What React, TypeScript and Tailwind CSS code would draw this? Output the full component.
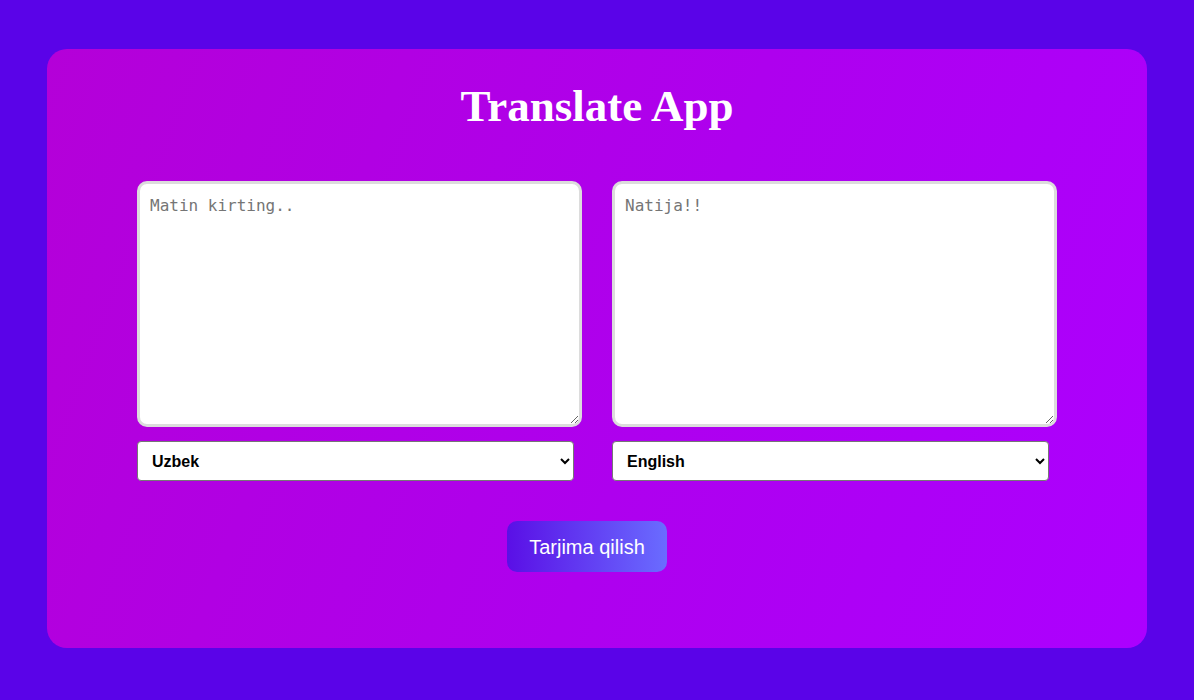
import { useState } from 'react';

export default function App() {
  const [text, setText] = useState('');
  const [result] = useState('');
  const [from, setFrom] = useState('uz');
  const [to, setTo] = useState('en');

  return (
    <div className="min-h-[700px] w-full bg-[#5a03e8] pt-[49px] pb-[52px]">
      {/* Card */}
      <div className="mx-auto w-[1100px] rounded-[20px] bg-[linear-gradient(110deg,#b400d8_0%,#ae00ee_55%,#ac00ff_100%)] px-[90px] pt-[33px] pb-[76px]">
        <h1 className="text-center text-[45px] leading-[48px] font-bold text-white [font-family:'Liberation_Serif',serif] mb-[51px]">
          Translate App
        </h1>

        <div className="grid grid-cols-2 gap-[30px]">
          <div className="flex flex-col gap-[14px]">
            <textarea
              value={text}
              onChange={(e) => setText(e.target.value)}
              placeholder="Matin kirting.."
              className="block h-[246px] w-full rounded-[10px] border-[3px] border-[#dcdcdc] bg-white px-[10px] py-[10px] text-[16px] text-black outline-none placeholder:text-[#757575] [font-family:'DejaVu_Sans_Mono',monospace]"
            />
            <select
              value={from}
              onChange={(e) => setFrom(e.target.value)}
              className="h-[40px] w-[437px] rounded-[4px] border border-[#767676] bg-white pl-[10px] pr-[4px] text-[16px] font-bold text-black [font-family:'Liberation_Sans',Arial,sans-serif]"
            >
              <option value="uz">Uzbek</option>
              <option value="en">English</option>
              <option value="ru">Russian</option>
            </select>
          </div>

          <div className="flex flex-col gap-[14px]">
            <textarea
              value={result}
              readOnly
              placeholder="Natija!!"
              className="block h-[246px] w-full rounded-[10px] border-[3px] border-[#dcdcdc] bg-white px-[10px] py-[10px] text-[16px] text-black outline-none placeholder:text-[#757575] [font-family:'DejaVu_Sans_Mono',monospace]"
            />
            <select
              value={to}
              onChange={(e) => setTo(e.target.value)}
              className="h-[40px] w-[437px] rounded-[4px] border border-[#767676] bg-white pl-[10px] pr-[4px] text-[16px] font-bold text-black [font-family:'Liberation_Sans',Arial,sans-serif]"
            >
              <option value="en">English</option>
              <option value="uz">Uzbek</option>
              <option value="ru">Russian</option>
            </select>
          </div>
        </div>

        <div className="mt-[40px] flex justify-center pr-[20px]">
          <button className="h-[51px] w-[160px] rounded-[10px] bg-[linear-gradient(to_right,#5a0fe6,#6a6cff)] text-[20px] text-white [font-family:'Liberation_Sans',Arial,sans-serif]">
            Tarjima qilish
          </button>
        </div>
      </div>
    </div>
  );
}
